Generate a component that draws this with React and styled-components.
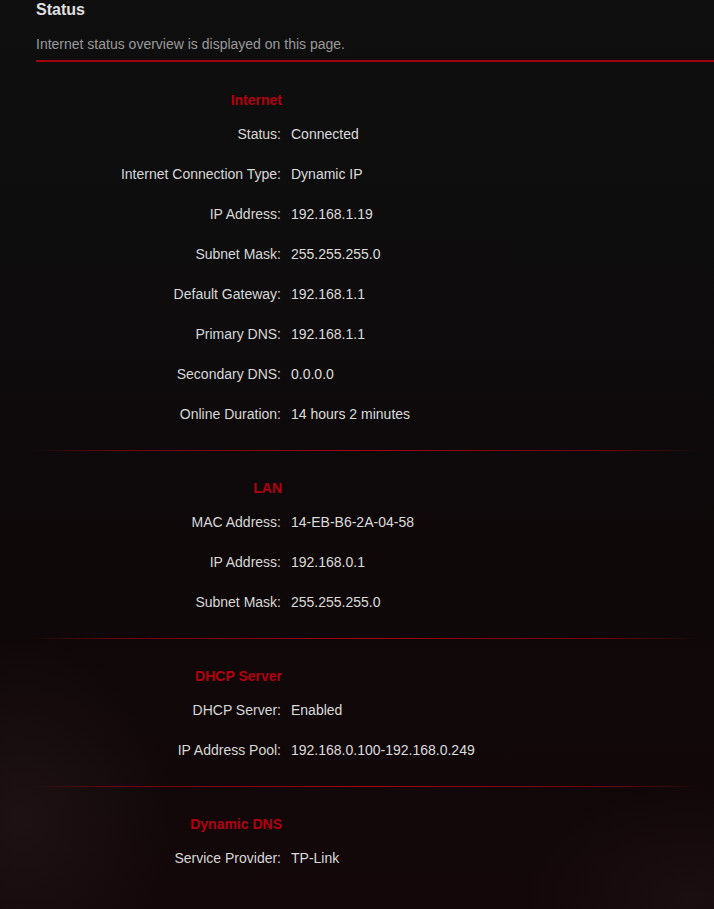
import React from "react";
import styled, { createGlobalStyle } from "styled-components";

const GlobalStyle = createGlobalStyle`
  html, body {
    margin: 0;
    padding: 0;
  }
  body {
    min-height: 100vh;
    background-color: #0f0f10;
    background-image:
      radial-gradient(ellipse 220px 260px at 20px 820px, rgba(80, 58, 60, 0.2), transparent 70%),
      radial-gradient(ellipse 240px 160px at 690px 900px, rgba(80, 58, 60, 0.14), transparent 70%),
      linear-gradient(180deg, #0f0f10 0%, #0e0c0d 35%, #0e0809 60%, #130709 100%);
    font-family: "Liberation Sans", Arial, Helvetica, sans-serif;
    color: #d9d9d9;
  }
`;

const Page = styled.div`
  min-height: 100vh;
  padding-left: 36px;
  box-sizing: border-box;
`;

const Header = styled.header`
  padding-bottom: 6px;
  border-bottom: 2px solid #a3000e;
`;

const Title = styled.h1`
  margin: 0;
  font-size: 16px;
  line-height: 20px;
  font-weight: bold;
  color: #e0e0e0;
`;

const Subtitle = styled.p`
  margin: 14px 0 0;
  font-size: 14px;
  line-height: 20px;
  color: #9a9a9a;
`;

const Section = styled.section`
  padding: ${(p) => (p.$first ? "28px" : "27px")} 0 16px;
`;

const Divider = styled.div`
  height: 1px;
  margin-left: -6px;
  margin-right: 14px;
  background: linear-gradient(
    90deg,
    rgba(170, 0, 16, 0) 0%,
    rgba(170, 0, 16, 0.6) 12%,
    #a8000f 50%,
    rgba(170, 0, 16, 0.6) 88%,
    rgba(170, 0, 16, 0) 100%
  );
`;

const Heading = styled.h2`
  margin: 0 0 4px;
  width: 246px;
  text-align: right;
  font-size: 14px;
  line-height: 20px;
  font-weight: bold;
  color: #b3000f;
`;

const Row = styled.div`
  display: flex;
  height: 40px;
  line-height: 40px;
  font-size: 14px;
`;

const Label = styled.span`
  width: 245px;
  flex-shrink: 0;
  text-align: right;
  color: #d8d8d8;
`;

const Value = styled.span`
  margin-left: 10px;
  color: #dcdcdc;
`;

const sections = [
  {
    title: "Internet",
    rows: [
      ["Status", "Connected"],
      ["Internet Connection Type", "Dynamic IP"],
      ["IP Address", "192.168.1.19"],
      ["Subnet Mask", "255.255.255.0"],
      ["Default Gateway", "192.168.1.1"],
      ["Primary DNS", "192.168.1.1"],
      ["Secondary DNS", "0.0.0.0"],
      ["Online Duration", "14 hours 2 minutes"],
    ],
  },
  {
    title: "LAN",
    rows: [
      ["MAC Address", "14-EB-B6-2A-04-58"],
      ["IP Address", "192.168.0.1"],
      ["Subnet Mask", "255.255.255.0"],
    ],
  },
  {
    title: "DHCP Server",
    rows: [
      ["DHCP Server", "Enabled"],
      ["IP Address Pool", "192.168.0.100-192.168.0.249"],
    ],
  },
  {
    title: "Dynamic DNS",
    rows: [["Service Provider", "TP-Link"]],
  },
];

export default function App() {
  return (
    <Page>
      <GlobalStyle />
      <Header>
        <Title>Status</Title>
        <Subtitle>Internet status overview is displayed on this page.</Subtitle>
      </Header>
      {sections.map((section, i) => (
        <React.Fragment key={section.title}>
          {i > 0 && <Divider />}
          <Section $first={i === 0}>
            <Heading>{section.title}</Heading>
            {section.rows.map(([label, value]) => (
              <Row key={label}>
                <Label>{label}:</Label>
                <Value>{value}</Value>
              </Row>
            ))}
          </Section>
        </React.Fragment>
      ))}
    </Page>
  );
}
